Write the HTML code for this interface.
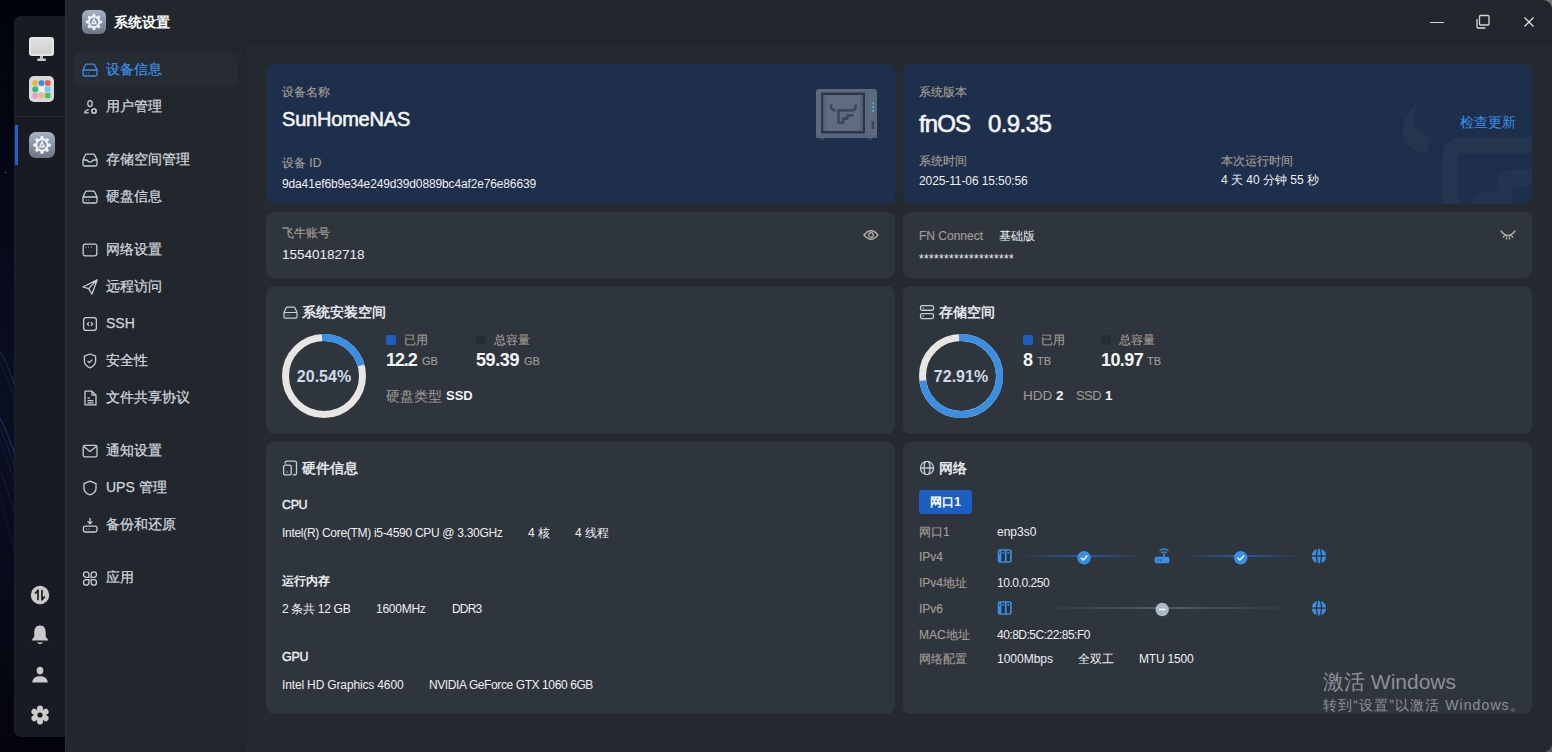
<!DOCTYPE html>
<html><head><meta charset="utf-8">
<style>
*{box-sizing:border-box;margin:0;padding:0}
html,body{width:1552px;height:752px;overflow:hidden}
body{font-family:"Liberation Sans",sans-serif;background:#070a16;position:relative;color:#e6e8eb}
.a{position:absolute;white-space:nowrap;line-height:1}
#wall{left:0;top:0;width:66px;height:752px;background:linear-gradient(180deg,#01030a 0%,#060918 30%,#0b0f24 55%,#080b1c 75%,#03040b 100%)}
#dock{left:14px;top:16px;width:51px;height:721px;background:#181b21;box-shadow:inset 1px 0 0 #1d2027;border-radius:8px 0 0 8px}
#win{left:65px;top:0;width:1487px;height:752px;background:#22262d;border-radius:0 9px 9px 0;overflow:hidden;border-left:1px solid #2c3036}
#side{left:0;top:0;width:181px;height:752px;background:#22262d}
#content{left:180px;top:44px;width:1307px;height:708px;background:#252a31;border-top-left-radius:8px;box-shadow:-1px -1px 0 #202329}
.card{position:absolute;background:#2f353d;border-radius:8px;overflow:hidden}
.blue{background:#1e2f4b}
.nav{position:absolute;left:106px;font-size:14px;-webkit-text-stroke:0.25px currentColor;color:#d0d6dc;line-height:1;white-space:nowrap}
.ni{position:absolute;left:82px;width:16px;height:16px}
.lbl{color:#a39d95;font-size:12px;-webkit-text-stroke:0.15px currentColor}
.val{color:#eef0f2;font-size:12px}
.ttl{font-size:14px;color:#e3e6ea;font-weight:700}
</style></head><body>
<div id="wall" class="a"></div>
<div class="a" style="left:1520px;top:0;width:32px;height:752px;background:linear-gradient(180deg,#707172 0%,#5d5f62 50%,#55585c 100%)"></div>
<svg class="a" style="left:0;top:0;opacity:0.6" width="14" height="752" viewBox="0 0 14 752" fill="none" stroke-linecap="round">
  <path d="M0 352 Q6 360 14 384" stroke="#5a5f92" stroke-width="0.8" opacity="0.8"/>
  <path d="M0 362 Q5 372 14 396" stroke="#3c4070" stroke-width="0.7" opacity="0.7"/>
  <path d="M0 418 Q7 432 14 452" stroke="#6a6ea6" stroke-width="0.8" opacity="0.8"/>
  <path d="M0 428 Q8 446 14 466" stroke="#4a4e82" stroke-width="0.7" opacity="0.7"/>
  <path d="M0 440 Q6 456 14 480" stroke="#3a3e6e" stroke-width="0.7" opacity="0.6"/>
  <path d="M0 470 Q6 486 14 512" stroke="#474b7e" stroke-width="0.7" opacity="0.6"/>
  <path d="M0 500 Q7 520 14 548" stroke="#35396a" stroke-width="0.7" opacity="0.6"/>
  <circle cx="5.5" cy="172.5" r="0.7" fill="#9aa0c0" stroke="none"/>
</svg>
<div id="dock" class="a"></div>
<div id="win" class="a">
    <div id="content" class="a"></div>
</div>

<!-- DOCK -->
<div class="a" style="left:14px;top:116px;width:51px;height:1px;background:#26272b"></div>
<div class="a" style="left:15px;top:125px;width:3px;height:40px;background:#1f5fd0"></div>
<!-- monitor -->
<svg class="a" style="left:28px;top:36px" width="27" height="26" viewBox="0 0 27 26">
  <defs><linearGradient id="mg" x1="0" y1="0" x2="0" y2="1"><stop offset="0" stop-color="#dedede"/><stop offset="1" stop-color="#d0d0d0"/></linearGradient></defs>
  <rect x="1" y="1" width="25" height="19" rx="3" fill="#e6e6e6"/>
  <rect x="3" y="3" width="21" height="15" rx="1.5" fill="url(#mg)"/>
  <rect x="12" y="20" width="3" height="3" fill="#bdbdbd"/>
  <rect x="9" y="22.5" width="9" height="2.5" rx="1.2" fill="#c9c9c9"/>
</svg>
<!-- apps -->
<svg class="a" style="left:29px;top:76px" width="26" height="26" viewBox="0 0 26 26">
  <rect x="0" y="0" width="25" height="26" rx="5" fill="#d9d9d9"/>
  <rect x="3.4" y="4.2" width="5.6" height="5.6" rx="1.8" fill="#f6b13c"/>
  <rect x="9.7" y="4.2" width="5.6" height="5.6" rx="1.8" fill="#3b8eea"/>
  <rect x="16.0" y="4.2" width="5.6" height="5.6" rx="1.8" fill="#ee5a4c"/>
  <rect x="3.4" y="10.5" width="5.6" height="5.6" rx="1.8" fill="#27c16a"/>
  <rect x="9.7" y="10.5" width="5.6" height="5.6" rx="1.8" fill="#eef3f8"/>
  <rect x="16.0" y="10.5" width="5.6" height="5.6" rx="1.8" fill="#6fcaf6"/>
  <rect x="3.4" y="16.8" width="5.6" height="5.6" rx="1.8" fill="#e59bd2"/>
  <rect x="9.7" y="16.8" width="5.6" height="5.6" rx="1.8" fill="#f2b77e"/>
  <rect x="16.0" y="16.8" width="5.6" height="5.6" rx="1.8" fill="#47c35c"/>
</svg>
<!-- gear app dock -->
<svg class="a" style="left:29px;top:132px" width="26" height="26" viewBox="0 0 24 24">
  <defs><linearGradient id="gg" x1="0" y1="0" x2="0" y2="1"><stop offset="0" stop-color="#a6b3c6"/><stop offset="1" stop-color="#6c7584"/></linearGradient>
  <g id="gearw">
    <circle cx="12" cy="12" r="6.2" fill="#eef0f3"/>
    <g fill="#eef0f3">
      <rect x="10.5" y="3.8" width="3" height="4" rx="1.2"/>
      <rect x="10.5" y="3.8" width="3" height="4" rx="1.2" transform="rotate(45 12 12)"/>
      <rect x="10.5" y="3.8" width="3" height="4" rx="1.2" transform="rotate(90 12 12)"/>
      <rect x="10.5" y="3.8" width="3" height="4" rx="1.2" transform="rotate(135 12 12)"/>
      <rect x="10.5" y="3.8" width="3" height="4" rx="1.2" transform="rotate(180 12 12)"/>
      <rect x="10.5" y="3.8" width="3" height="4" rx="1.2" transform="rotate(225 12 12)"/>
      <rect x="10.5" y="3.8" width="3" height="4" rx="1.2" transform="rotate(270 12 12)"/>
      <rect x="10.5" y="3.8" width="3" height="4" rx="1.2" transform="rotate(315 12 12)"/>
    </g>
    <circle cx="12" cy="12" r="4.3" fill="#8a96a8"/>
    <path d="M12 7.4 L8.9 14.3 H15.1 Z" fill="#eef0f3"/>
    <rect x="11.3" y="11.4" width="1.4" height="1.6" fill="#8a96a8"/>
  </g></defs>
  <rect x="0" y="0" width="24" height="24" rx="6" fill="url(#gg)"/>
  <use href="#gearw"/>
</svg>
<!-- bottom dock icons -->
<svg class="a" style="left:30px;top:585px" width="20" height="20" viewBox="0 0 20 20">
  <circle cx="10" cy="10" r="9.2" fill="#cacaca"/>
  <path d="M8 5.2 V14.5 M5.6 8 L8 5.3 M12 14.8 V5.5 M14.4 12 L12 14.7" stroke="#181b21" stroke-width="1.7" fill="none" stroke-linecap="round"/>
</svg>
<svg class="a" style="left:30px;top:624px" width="20" height="22" viewBox="0 0 20 22">
  <path d="M10 1.5 C5.6 1.5 4.3 5 4.3 8.5 V12.5 L1.5 16.5 H18.5 L15.7 12.5 V8.5 C15.7 5 14.4 1.5 10 1.5 Z" fill="#cacaca"/>
  <path d="M8 18.6 Q10 20.4 12 18.6" stroke="#cacaca" stroke-width="1.3" fill="none" stroke-linecap="round"/>
</svg>
<svg class="a" style="left:31px;top:666px" width="18" height="18" viewBox="0 0 18 18">
  <ellipse cx="9" cy="4.6" rx="3.3" ry="3.8" fill="#cacaca"/>
  <path d="M1.2 16.5 C1.8 11.8 5 10.3 9 10.3 C13 10.3 16.2 11.8 16.8 16.5 Z" fill="#cacaca"/>
</svg>
<svg class="a" style="left:30px;top:705px" width="20" height="20" viewBox="-10 -10 20 20">
  <g fill="#cacaca">
    <circle r="6"/>
    <g id="t2"><circle cx="0" cy="-6.5" r="3"/><circle cx="0" cy="6.5" r="3"/></g>
    <use href="#t2" transform="rotate(60)"/><use href="#t2" transform="rotate(120)"/>
  </g>
  <circle r="2.6" fill="#181b21"/>
</svg>

<!-- HEADER -->
<svg class="a" style="left:82px;top:10px" width="24" height="24" viewBox="0 0 24 24">
  <rect x="0" y="0" width="24" height="24" rx="6" fill="url(#gg)"/>
  <use href="#gearw"/>
</svg>
<div class="a" style="left:114px;top:15px;font-size:14px;color:#fff;font-weight:700">系统设置</div>
<div class="a" style="left:1430px;top:21.5px;width:14px;height:1.2px;background:#d4d4d4"></div>
<svg class="a" style="left:1475px;top:14px" width="16" height="16" viewBox="0 0 16 16">
  <rect x="4.5" y="1.5" width="9.5" height="9.5" rx="1" fill="none" stroke="#d8d8d8" stroke-width="1.3"/>
  <path d="M2 5 V13 a1 1 0 0 0 1 1 H10.5" fill="none" stroke="#d8d8d8" stroke-width="1.3"/>
</svg>
<svg class="a" style="left:1523px;top:16px" width="12" height="12" viewBox="0 0 12 12">
  <path d="M1.5 1.5 L10.5 10.5 M10.5 1.5 L1.5 10.5" stroke="#e8e8e8" stroke-width="1.2"/>
</svg>

<!-- SIDEBAR -->
<div class="a" style="left:74px;top:52px;width:163px;height:35px;background:#272b32;border-radius:7px"></div>
<div class="nav" style="top:62px;color:#3a8ee8">设备信息</div>
<div class="nav" style="top:99px">用户管理</div>
<div class="nav" style="top:152px">存储空间管理</div>
<div class="nav" style="top:189px">硬盘信息</div>
<div class="nav" style="top:242px">网络设置</div>
<div class="nav" style="top:279px">远程访问</div>
<div class="nav" style="top:316px">SSH</div>
<div class="nav" style="top:353px">安全性</div>
<div class="nav" style="top:390px">文件共享协议</div>
<div class="nav" style="top:443px">通知设置</div>
<div class="nav" style="top:480px">UPS 管理</div>
<div class="nav" style="top:517px">备份和还原</div>
<div class="nav" style="top:570px">应用</div>


<!-- NAV ICONS -->
<svg class="a" style="left:82px;top:63px" width="16" height="14" viewBox="0 0 16 14" fill="none" stroke="#3a8ee8" stroke-width="1.3">
  <path d="M1 7 L3.2 2.2 Q3.7 1.2 4.8 1.2 H11.2 Q12.3 1.2 12.8 2.2 L15 7 V11.5 Q15 13 13.5 13 H2.5 Q1 13 1 11.5 Z M1 7 H15"/>
  <path d="M3.8 10 H4.6 M6.2 10 H7" stroke-width="1.2"/>
</svg>
<svg class="a" style="left:82px;top:99px" width="16" height="16" viewBox="0 0 16 16" fill="none" stroke="#c5ced8" stroke-width="1.3">
  <ellipse cx="8" cy="4.6" rx="2.2" ry="3"/>
  <path d="M2.5 13.8 Q3 11.5 6.8 10.6 M2.5 13.8 H6.8" />
  <circle cx="12" cy="12" r="2.1" stroke-width="1.5"/>
  <path d="M12 9 V9.6 M12 14.4 V15 M9 12 H9.6 M14.4 12 H15 M9.9 9.9 L10.3 10.3 M13.7 13.7 L14.1 14.1 M9.9 14.1 L10.3 13.7 M13.7 10.3 L14.1 9.9" stroke-width="1.3"/>
</svg>
<svg class="a" style="left:82px;top:153px" width="16" height="14" viewBox="0 0 16 14" fill="none" stroke="#c5ced8" stroke-width="1.3">
  <path d="M1 7 L3.2 2.2 Q3.7 1.2 4.8 1.2 H11.2 Q12.3 1.2 12.8 2.2 L15 7 V11.5 Q15 13 13.5 13 H2.5 Q1 13 1 11.5 Z"/>
  <path d="M1 7 H4.6 L6.6 8.8 H9.4 L11.4 7 H15"/>
</svg>
<svg class="a" style="left:82px;top:190px" width="16" height="14" viewBox="0 0 16 14" fill="none" stroke="#c5ced8" stroke-width="1.3">
  <path d="M1 7 L3.2 2.2 Q3.7 1.2 4.8 1.2 H11.2 Q12.3 1.2 12.8 2.2 L15 7 V11.5 Q15 13 13.5 13 H2.5 Q1 13 1 11.5 Z M1 7 H15"/>
  <path d="M3.8 10 H4.6 M6.2 10 H7" stroke-width="1.2"/>
</svg>
<svg class="a" style="left:82px;top:243px" width="16" height="14" viewBox="0 0 16 14" fill="none" stroke="#c5ced8" stroke-width="1.3">
  <rect x="1.2" y="1.2" width="13.6" height="11.6" rx="2"/>
  <path d="M3.6 4.2 H4.3 M6.3 4.2 H7 M9 4.2 H9.7" stroke-width="1.2"/>
</svg>
<svg class="a" style="left:82px;top:279px" width="16" height="16" viewBox="0 0 16 16" fill="none" stroke="#c5ced8" stroke-width="1.3" stroke-linejoin="round">
  <path d="M15.2 0.8 L1 8 L6.6 9.6 L10 15 Z M6.6 9.6 L15.2 0.8"/>
</svg>
<svg class="a" style="left:82px;top:316px" width="16" height="16" viewBox="0 0 16 16" fill="none" stroke="#c5ced8" stroke-width="1.3">
  <rect x="1.6" y="1.6" width="12.8" height="12.8" rx="2.4"/>
  <path d="M7 6.2 L5.4 8 L7 9.8 M9 6.2 L10.6 8 L9 9.8" stroke-width="1.2"/>
</svg>
<svg class="a" style="left:82px;top:353px" width="16" height="16" viewBox="0 0 16 16" fill="none" stroke="#c5ced8" stroke-width="1.3" stroke-linejoin="round">
  <path d="M8 1 L13.6 3.2 V8.2 Q13.6 12.2 8 14.8 Q2.4 12.2 2.4 8.2 V3.2 Z"/>
  <path d="M5.6 8 L7.3 9.6 L10.4 6.6"/>
</svg>
<svg class="a" style="left:82px;top:390px" width="16" height="16" viewBox="0 0 16 16" fill="none" stroke="#c5ced8" stroke-width="1.3" stroke-linejoin="round">
  <path d="M3 1.2 H10 L14 5.2 V14.8 H3 Z M10 1.2 V5.2 H14"/>
  <path d="M5.5 8.2 H8 M5.5 10.6 H11.5 M5.5 12.8 H11.5" stroke-width="1.2"/>
</svg>
<svg class="a" style="left:82px;top:444px" width="16" height="14" viewBox="0 0 16 14" fill="none" stroke="#c5ced8" stroke-width="1.3" stroke-linejoin="round">
  <rect x="1.2" y="1.4" width="13.8" height="11.4" rx="1.6"/>
  <path d="M1.6 2.2 L8 7.6 L14.6 2.2"/>
</svg>
<svg class="a" style="left:82px;top:480px" width="16" height="16" viewBox="0 0 16 16" fill="none" stroke="#c5ced8" stroke-width="1.3" stroke-linejoin="round">
  <path d="M8 1.2 L14 3.6 V8.4 Q14 12.6 8 14.9 Q2 12.6 2 8.4 V3.6 Z"/>
</svg>
<svg class="a" style="left:82px;top:517px" width="16" height="16" viewBox="0 0 16 16" fill="none" stroke="#c5ced8" stroke-width="1.3" stroke-linejoin="round">
  <path d="M8 1 V6.6 M5.6 4.4 L8 6.8 L10.4 4.4"/>
  <rect x="1.4" y="9.2" width="13.6" height="5.8" rx="1.8"/>
  <path d="M4.2 12.1 H5 M6.6 12.1 H7.4" stroke-width="1.3"/>
</svg>
<svg class="a" style="left:82px;top:571px" width="16" height="15" viewBox="0 0 16 15" fill="none" stroke="#c5ced8" stroke-width="1.3">
  <path d="M4.2 0.9 Q6.9 0.9 6.9 3.6 V6.3 H4.2 Q1.5 6.3 1.5 3.6 Q1.5 0.9 4.2 0.9 Z"/>
  <path d="M11.8 0.9 Q9.1 0.9 9.1 3.6 V6.3 H11.8 Q14.5 6.3 14.5 3.6 Q14.5 0.9 11.8 0.9 Z"/>
  <path d="M4.2 14.1 Q6.9 14.1 6.9 11.4 V8.7 H4.2 Q1.5 8.7 1.5 11.4 Q1.5 14.1 4.2 14.1 Z"/>
  <path d="M11.8 14.1 Q9.1 14.1 9.1 11.4 V8.7 H11.8 Q14.5 8.7 14.5 11.4 Q14.5 14.1 11.8 14.1 Z"/>
</svg>

<!-- CARDS -->
<div class="card blue" style="left:266px;top:64px;width:629px;height:140px"></div>
<div class="card blue" style="left:903px;top:64px;width:629px;height:140px">
  <svg class="a" style="left:0;top:0" width="629" height="140" viewBox="903 64 629 140">
    <path d="M1419 103 Q1400 116 1403 134 Q1406 152 1428 154 Q1428 143 1434 137.5 Q1416 133 1413.5 121 Q1412 111 1419 103 Z" fill="#24364f"/>
    <path d="M1450.5 210 V157 Q1450.5 145.5 1462 145.5 H1540" fill="none" stroke="#24364f" stroke-width="16"/>
    <path d="M1480 210 V203 Q1480 199.5 1484 199.5 H1501 Q1505 199.5 1505 195.5 V182 Q1505 178 1509 178 H1540" fill="none" stroke="#223450" stroke-width="16" stroke-linejoin="round"/>
  </svg>
</div>
<div class="card" style="left:266px;top:212px;width:629px;height:66px"></div>
<div class="card" style="left:903px;top:212px;width:629px;height:66px"></div>
<div class="card" style="left:266px;top:286px;width:629px;height:148px"></div>
<div class="card" style="left:903px;top:286px;width:629px;height:148px"></div>
<div class="card" style="left:266px;top:442px;width:629px;height:272px"></div>
<div class="card" style="left:903px;top:442px;width:629px;height:272px"></div>

<!-- card1 -->
<div class="a lbl" style="left:282px;top:86px">设备名称</div>
<div class="a" style="left:282px;top:109px;font-size:20px;font-weight:400;-webkit-text-stroke:0.55px #f4f5f6;color:#f4f5f6;letter-spacing:-0.2px">SunHomeNAS</div>
<div class="a lbl" style="left:282px;top:157px">设备 ID</div>
<div class="a val" style="left:282px;top:178px;letter-spacing:-0.14px">9da41ef6b9e34e249d39d0889bc4af2e76e86639</div>
<!-- NAS icon -->
<svg class="a" style="left:815px;top:88px" width="63" height="52" viewBox="0 0 63 52">
  <rect x="1" y="1" width="61" height="49" rx="3" fill="#5d6a7e"/>
  <rect x="1" y="47" width="61" height="3" fill="#56637a"/>
  <rect x="6" y="4.5" width="44" height="41" rx="1" fill="#2c3644"/>
  <rect x="8.5" y="7" width="39" height="36" fill="#5f6c80"/>
  <rect x="8.5" y="7" width="3" height="36" fill="#56637a"/>
  <rect x="44.5" y="7" width="3" height="36" fill="#56637a"/>
  <path d="M15.8 16.5 Q14.8 21.8 20.5 22.4 M23.5 35.5 V22.4 H37 Q41.6 22.4 40.4 16.5 M23.5 34.6 H28.3 V30.6 H32.3 V27.4 H38.5" fill="none" stroke="#3c4757" stroke-width="2.6" stroke-linejoin="round"/>
  <rect x="51" y="1" width="0.8" height="49" fill="#55627a"/>
  <circle cx="58" cy="15.5" r="1" fill="#2ec4d0"/>
  <circle cx="58" cy="19" r="1" fill="#2ec4d0"/>
  <circle cx="58" cy="23" r="1" fill="#2ec4d0"/>
  <rect x="56.5" y="33" width="2.8" height="8" fill="#3c4656"/>
  <rect x="5" y="50" width="4" height="2" fill="#3c4656"/>
  <rect x="53" y="50" width="4" height="2" fill="#3c4656"/>
</svg>

<!-- card2 -->
<div class="a lbl" style="left:919px;top:86px">系统版本</div>
<div class="a" style="left:919px;top:112px;font-size:24px;font-weight:400;-webkit-text-stroke:0.6px #f4f5f6;color:#f4f5f6;letter-spacing:-0.9px">fnOS</div>
<div class="a" style="left:988px;top:112px;font-size:24px;font-weight:400;-webkit-text-stroke:0.6px #f4f5f6;color:#f4f5f6;letter-spacing:-0.6px">0.9.35</div>
<div class="a" style="left:1460px;top:115px;font-size:14px;color:#3b8ee8">检查更新</div>
<div class="a lbl" style="left:919px;top:155px">系统时间</div>
<div class="a val" style="left:919px;top:175px;letter-spacing:-0.1px">2025-11-06 15:50:56</div>
<div class="a lbl" style="left:1221px;top:155px">本次运行时间</div>
<div class="a val" style="left:1221px;top:174px">4 天 40 分钟 55 秒</div>

<!-- card3 -->
<div class="a lbl" style="left:282px;top:227px">飞牛账号</div>
<div class="a" style="left:282px;top:248px;font-size:13.5px;color:#eef0f2">15540182718</div>
<svg class="a" style="left:863px;top:229px" width="16" height="12" viewBox="0 0 16 12" fill="none" stroke="#b5aea4" stroke-width="1.3">
  <path d="M1 6 Q8 -2.5 15 6 Q8 14.5 1 6 Z"/>
  <circle cx="8" cy="6" r="2.3"/>
</svg>

<!-- card4 -->
<div class="a lbl" style="left:919px;top:230px">FN Connect</div>
<div class="a val" style="left:999px;top:230px">基础版</div>
<div class="a val" style="left:919px;top:253px;letter-spacing:0.33px">*******************</div>
<svg class="a" style="left:1500px;top:230px" width="16" height="10" viewBox="0 0 16 10" fill="none" stroke="#b5aea4" stroke-width="1.3" stroke-linecap="round">
  <path d="M1 1 Q8 10 15 1 M4.5 5.6 L3.2 7.2 M11.5 5.6 L12.8 7.2 M6.5 6.8 V9 M9.5 6.8 V9"/>
</svg>

<!-- card5 -->
<svg class="a" style="left:282.5px;top:305.5px" width="15" height="13" viewBox="0 0 16 14" fill="none" stroke="#c5ced8" stroke-width="1.3">
  <path d="M1 7 L3.2 2.2 Q3.7 1.2 4.8 1.2 H11.2 Q12.3 1.2 12.8 2.2 L15 7 V11.5 Q15 13 13.5 13 H2.5 Q1 13 1 11.5 Z M1 7 H15"/>
  <path d="M3.8 10 H4.6 M6.2 10 H7" stroke-width="1.2"/>
</svg>
<div class="a ttl" style="left:302px;top:305px">系统安装空间</div>
<svg class="a" style="left:282px;top:334px" width="84" height="84" viewBox="0 0 84 84">
  <circle cx="42" cy="42" r="38.5" fill="none" stroke="#e8e6e2" stroke-width="7"/>
  <circle cx="42" cy="42" r="38.5" fill="none" stroke="#3b8fe3" stroke-width="7" stroke-dasharray="51.7 300" transform="rotate(-93 42 42)"/>
</svg>
<div class="a" style="left:282px;top:369px;width:84px;text-align:center;font-size:16px;font-weight:700;color:#cfdbe8">20.54%</div>
<div class="a" style="left:386px;top:335px;width:10px;height:10px;border-radius:2px;background:#1d5fc0"></div>
<div class="a lbl" style="left:404px;top:334px">已用</div>
<div class="a" style="left:476px;top:335px;width:10px;height:10px;border-radius:2px;background:#282d33"></div>
<div class="a lbl" style="left:494px;top:334px">总容量</div>
<div class="a" style="left:386px;top:351px;font-size:18px;font-weight:700;color:#f4f5f6;letter-spacing:-1.1px">12.2</div>
<div class="a lbl" style="left:422px;top:356px;font-size:11px">GB</div>
<div class="a" style="left:476px;top:351px;font-size:18px;font-weight:700;color:#f4f5f6;letter-spacing:-0.4px">59.39</div>
<div class="a lbl" style="left:524px;top:356px;font-size:11px">GB</div>
<div class="a" style="left:386px;top:389px;font-size:14px;color:#a09c96">硬盘类型</div>
<div class="a" style="left:446px;top:389px;font-size:13px;font-weight:700;color:#f4f5f6">SSD</div>

<!-- card6 -->
<svg class="a" style="left:918px;top:304px" width="17" height="16" viewBox="0 0 17 16" fill="none" stroke="#c5ced8" stroke-width="1.3">
  <rect x="2.55" y="1.55" width="12.9" height="4.7" rx="1.5"/>
  <rect x="2.55" y="9.55" width="12.9" height="5" rx="1.5"/>
  <rect x="4.4" y="3.2" width="1.8" height="1.6" fill="#7d8792" stroke="none"/>
  <rect x="4.4" y="11.3" width="1.8" height="1.6" fill="#7d8792" stroke="none"/>
</svg>
<div class="a ttl" style="left:939px;top:305px">存储空间</div>
<svg class="a" style="left:919px;top:334px" width="84" height="84" viewBox="0 0 84 84">
  <circle cx="42" cy="42" r="38.5" fill="none" stroke="#e8e6e2" stroke-width="7"/>
  <circle cx="42" cy="42" r="38.5" fill="none" stroke="#3b8fe3" stroke-width="7" stroke-dasharray="178.4 300" transform="rotate(-93 42 42)"/>
</svg>
<div class="a" style="left:919px;top:369px;width:84px;text-align:center;font-size:16px;font-weight:700;color:#cfdbe8">72.91%</div>
<div class="a" style="left:1023px;top:335px;width:10px;height:10px;border-radius:2px;background:#1d5fc0"></div>
<div class="a lbl" style="left:1041px;top:334px">已用</div>
<div class="a" style="left:1101px;top:335px;width:10px;height:10px;border-radius:2px;background:#282d33"></div>
<div class="a lbl" style="left:1119px;top:334px">总容量</div>
<div class="a" style="left:1023px;top:351px;font-size:18px;font-weight:700;color:#f4f5f6">8</div>
<div class="a lbl" style="left:1037px;top:356px;font-size:11px">TB</div>
<div class="a" style="left:1101px;top:351px;font-size:18px;font-weight:700;color:#f4f5f6;letter-spacing:-0.6px">10.97</div>
<div class="a lbl" style="left:1147px;top:356px;font-size:11px">TB</div>
<div class="a" style="left:1023px;top:389px;font-size:13.5px;color:#a09c96">HDD</div>
<div class="a" style="left:1056px;top:389px;font-size:13.5px;font-weight:700;color:#f4f5f6">2</div>
<div class="a" style="left:1076px;top:389px;font-size:13px;color:#a09c96;letter-spacing:-0.6px">SSD</div>
<div class="a" style="left:1105px;top:389px;font-size:13.5px;font-weight:700;color:#f4f5f6">1</div>

<!-- card7 -->
<svg class="a" style="left:282px;top:460px" width="16" height="16" viewBox="0 0 16 16" fill="none" stroke="#c5ced8" stroke-width="1.3" stroke-linejoin="round">
  <path d="M3.1 3.6 V3 Q3.1 1.1 5 1.1 H12.6 Q14.5 1.1 14.5 3 V13 Q14.5 14.9 12.6 14.9 H10.6"/>
  <rect x="1.6" y="5.2" width="7.6" height="9.7" rx="1.6"/>
  <path d="M5.3 11.6 V12.6" stroke-width="1.2"/>
</svg>
<div class="a ttl" style="left:302px;top:461px">硬件信息</div>
<div class="a" style="left:282px;top:499px;font-size:12.5px;font-weight:400;-webkit-text-stroke:0.4px #eef0f2;color:#eef0f2;letter-spacing:-0.4px">CPU</div>
<div class="a val" style="left:282px;top:527px;letter-spacing:-0.3px">Intel(R) Core(TM) i5-4590 CPU @ 3.30GHz</div>
<div class="a val" style="left:528px;top:527px">4 核</div>
<div class="a val" style="left:575px;top:527px">4 线程</div>
<div class="a ttl" style="left:282px;top:575px;font-size:12px;color:#eef0f2">运行内存</div>
<div class="a val" style="left:282px;top:603px;letter-spacing:-0.3px">2 条共 12 GB</div>
<div class="a val" style="left:376px;top:603px;letter-spacing:-0.25px">1600MHz</div>
<div class="a val" style="left:452px;top:603px;letter-spacing:-0.8px">DDR3</div>
<div class="a" style="left:282px;top:651px;font-size:12.5px;font-weight:400;-webkit-text-stroke:0.4px #eef0f2;color:#eef0f2;letter-spacing:-0.3px">GPU</div>
<div class="a val" style="left:282px;top:679px;letter-spacing:-0.15px">Intel HD Graphics 4600</div>
<div class="a val" style="left:429px;top:679px;letter-spacing:-0.4px">NVIDIA GeForce GTX 1060 6GB</div>

<!-- card8 -->
<svg class="a" style="left:918px;top:460px" width="17" height="17" viewBox="0 0 17 17" fill="none" stroke="#c5ced8" stroke-width="1.3">
  <circle cx="9" cy="8" r="6.55"/>
  <path d="M7.2 1.8 Q4.8 8 7.2 14.2 M10.8 1.8 Q13.2 8 10.8 14.2"/>
  <path d="M2.4 8 H15.6" stroke-width="1.5"/>
</svg>
<div class="a ttl" style="left:939px;top:461px">网络</div>
<div class="a" style="left:919px;top:490px;width:53px;height:24px;border-radius:3px;background:#1d5fc0"></div>
<div class="a" style="left:919px;top:496px;width:53px;text-align:center;font-size:12px;font-weight:700;color:#fff">网口1</div>
<div class="a lbl" style="left:919px;top:526px">网口1</div>
<div class="a val" style="left:997px;top:526px">enp3s0</div>
<div class="a lbl" style="left:919px;top:551px">IPv4</div>
<div class="a lbl" style="left:919px;top:577px">IPv4地址</div>
<div class="a val" style="left:997px;top:577px;letter-spacing:-0.45px">10.0.0.250</div>
<div class="a lbl" style="left:919px;top:603px">IPv6</div>
<div class="a lbl" style="left:919px;top:629px">MAC地址</div>
<div class="a val" style="left:997px;top:629px;letter-spacing:-0.5px">40:8D:5C:22:85:F0</div>
<div class="a lbl" style="left:919px;top:653px">网络配置</div>
<div class="a val" style="left:997px;top:653px">1000Mbps</div>
<div class="a val" style="left:1078px;top:653px">全双工</div>
<div class="a val" style="left:1139px;top:653px;letter-spacing:-0.2px">MTU 1500</div>

<!-- network flow -->
<svg class="a" style="left:990px;top:545px" width="345" height="75" viewBox="990 545 345 75">
  <defs>
    <linearGradient id="l1" x1="0" x2="1"><stop offset="0" stop-color="#2358a8" stop-opacity="0"/><stop offset="0.45" stop-color="#2358a8"/><stop offset="0.55" stop-color="#2358a8"/><stop offset="1" stop-color="#2358a8" stop-opacity="0"/></linearGradient>
    <linearGradient id="l2" x1="0" x2="1"><stop offset="0" stop-color="#52555a" stop-opacity="0"/><stop offset="0.45" stop-color="#55585c"/><stop offset="0.55" stop-color="#55585c"/><stop offset="1" stop-color="#52555a" stop-opacity="0"/></linearGradient>
    <g id="srv">
      <rect x="0.7" y="0.7" width="14" height="13.6" rx="2" fill="#3b8fe3"/>
      <rect x="4.4" y="2.2" width="3.4" height="10.6" fill="#2a3039"/>
      <rect x="9.6" y="2.2" width="3.4" height="10.6" fill="#2a3039"/>
      <rect x="5.3" y="3.2" width="1.6" height="2.4" rx="0.8" fill="#3b8fe3"/>
      <rect x="10.5" y="3.2" width="1.6" height="2.4" rx="0.8" fill="#3b8fe3"/>
      <rect x="2" y="2.6" width="1.1" height="3.6" rx="0.5" fill="#2a5a98"/>
    </g>
    <g id="glb">
      <circle cx="7.3" cy="7.3" r="7.3" fill="#3b8fe3"/>
      <path d="M0 7.3 H14.6" stroke="#2a3039" stroke-width="1.3"/>
      <path d="M6 0.3 Q3.6 7.3 6 14.3 M8.6 0.3 Q11 7.3 8.6 14.3" fill="none" stroke="#2a3039" stroke-width="1.2"/>
    </g>
  </defs>
  <use href="#srv" x="997" y="548.5"/>
  <rect x="1023" y="555" width="120" height="2" fill="url(#l1)"/>
  <circle cx="1084" cy="557.8" r="6.8" fill="#3b8fe3"/>
  <path d="M1080.8 557.8 L1083.2 560 L1087.4 555.6" fill="none" stroke="#f2f4f6" stroke-width="1.5"/>
  <!-- router -->
  <rect x="1154.6" y="556.8" width="14.8" height="6.4" rx="1.8" fill="#3b8fe3"/>
  <rect x="1163.2" y="553.5" width="1.6" height="4" fill="#3b8fe3"/>
  <path d="M1160 550.6 Q1164 547.2 1168 550.6 M1161.8 552.6 Q1164 551 1166.2 552.6" fill="none" stroke="#3b8fe3" stroke-width="1.3" stroke-linecap="round"/>
  <rect x="1157" y="559.3" width="1.3" height="1.8" fill="#2a5a98"/>
  <rect x="1159.8" y="559.3" width="1" height="1.8" fill="#2a3039"/>
  <rect x="1183" y="555" width="118" height="2" fill="url(#l1)"/>
  <circle cx="1240.7" cy="557.8" r="6.8" fill="#3b8fe3"/>
  <path d="M1237.5 557.8 L1239.9 560 L1244.1 555.6" fill="none" stroke="#f2f4f6" stroke-width="1.5"/>
  <use href="#glb" x="1311.7" y="548.7"/>
  <!-- ipv6 -->
  <use href="#srv" x="997" y="600.5"/>
  <rect x="1035" y="607" width="262" height="2" fill="url(#l2)"/>
  <circle cx="1162.2" cy="609.5" r="6.7" fill="#a9b9ca"/>
  <rect x="1158.8" y="608.6" width="6.8" height="2" rx="0.6" fill="#e6ebf0"/>
  <use href="#glb" x="1311.7" y="600.8"/>
</svg>

<!-- windows watermark -->
<div class="a" style="left:1323px;top:671px;font-size:21px;color:#8c9095">激活 Windows</div>
<div class="a" style="left:1323px;top:698px;font-size:14px;color:#8c9095;letter-spacing:1.1px">转到“设置”以激活 Windows。</div>
</body></html>
